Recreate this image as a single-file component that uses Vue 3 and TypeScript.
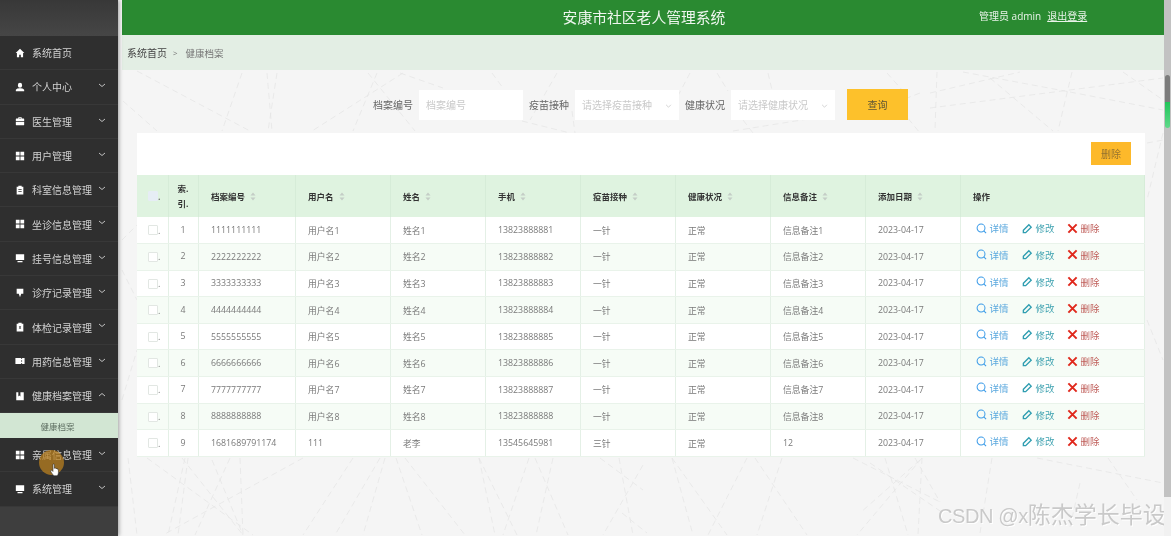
<script setup lang="ts">
interface MenuItem { label: string; icon: string; arrow?: 'down' | 'up'; sub?: string }
const menu: MenuItem[] = [
  { label: '系统首页', icon: 'home' },
  { label: '个人中心', icon: 'user', arrow: 'down' },
  { label: '医生管理', icon: 'case', arrow: 'down' },
  { label: '用户管理', icon: 'grid', arrow: 'down' },
  { label: '科室信息管理', icon: 'clip', arrow: 'down' },
  { label: '坐诊信息管理', icon: 'grid', arrow: 'down' },
  { label: '挂号信息管理', icon: 'screen', arrow: 'down' },
  { label: '诊疗记录管理', icon: 'pin', arrow: 'down' },
  { label: '体检记录管理', icon: 'clipx', arrow: 'down' },
  { label: '用药信息管理', icon: 'ticket', arrow: 'down' },
  { label: '健康档案管理', icon: 'book', arrow: 'up', sub: '健康档案' },
  { label: '亲属信息管理', icon: 'grid', arrow: 'down' },
  { label: '系统管理', icon: 'screen', arrow: 'down' },
]
const cols = ['档案编号', '用户名', '姓名', '手机', '疫苗接种', '健康状况', '信息备注', '添加日期']
const rows = [
  ['1111111111', '用户名1', '姓名1', '13823888881', '一针', '正常', '信息备注1'],
  ['2222222222', '用户名2', '姓名2', '13823888882', '一针', '正常', '信息备注2'],
  ['3333333333', '用户名3', '姓名3', '13823888883', '一针', '正常', '信息备注3'],
  ['4444444444', '用户名4', '姓名4', '13823888884', '一针', '正常', '信息备注4'],
  ['5555555555', '用户名5', '姓名5', '13823888885', '一针', '正常', '信息备注5'],
  ['6666666666', '用户名6', '姓名6', '13823888886', '一针', '正常', '信息备注6'],
  ['7777777777', '用户名7', '姓名7', '13823888887', '一针', '正常', '信息备注7'],
  ['8888888888', '用户名8', '姓名8', '13823888888', '一针', '正常', '信息备注8'],
  ['1681689791174', '111', '老李', '13545645981', '三针', '正常', '12'],
]
const lines = [
  [137, 71, 250, 131], [242, 73, 222, 131], [267, 73, 272, 131], [277, 73, 268, 131], [403, 73, 312, 131],
  [377, 73, 353, 131], [368, 73, 415, 131], [123, 101, 157, 131], [400, 73, 443, 88], [492, 73, 503, 88],
  [557, 73, 530, 120], [522, 121, 570, 133], [572, 111, 575, 133], [690, 73, 670, 111], [717, 73, 728, 91],
  [768, 73, 772, 90], [733, 131, 833, 115], [743, 120, 753, 133], [887, 73, 903, 91], [920, 93, 902, 100],
  [902, 111, 920, 133], [937, 72, 935, 130], [1072, 72, 1058, 131], [963, 72, 1070, 92], [1070, 92, 1163, 110],
  [930, 108, 1163, 78], [990, 78, 1053, 131], [1123, 72, 1163, 100], [930, 93, 1020, 72],
  [1163, 133, 1147, 200], [1147, 143, 1163, 140],
  [122, 240, 137, 225], [122, 270, 137, 300], [122, 400, 137, 350], [1147, 320, 1163, 360],
  [128, 458, 137, 535], [147, 458, 253, 535], [185, 458, 168, 535], [188, 458, 178, 535], [182, 458, 243, 535],
  [212, 460, 243, 535], [230, 458, 195, 535], [240, 458, 243, 535], [303, 458, 163, 535], [353, 458, 303, 535],
  [380, 458, 335, 535], [385, 458, 363, 535], [396, 458, 422, 535], [405, 458, 465, 535], [479, 458, 495, 535],
  [479, 458, 517, 535], [529, 458, 503, 535], [535, 458, 568, 535], [553, 458, 536, 535], [600, 458, 643, 490],
  [619, 458, 633, 535], [643, 465, 603, 535], [672, 458, 693, 535], [672, 458, 727, 535], [747, 458, 708, 535],
  [755, 458, 807, 535], [782, 458, 757, 535], [622, 513, 647, 533], [853, 458, 940, 502], [885, 458, 908, 535],
  [922, 458, 857, 535], [922, 458, 918, 535], [915, 458, 940, 502], [992, 458, 980, 533], [1037, 458, 1163, 483],
  [1108, 458, 1137, 500], [1080, 483, 1070, 527], [920, 460, 860, 513], [870, 463, 943, 513],
]
</script>

<template>
  <div class="page">
    <aside class="side">
      <div class="side-top"></div>
      <template v-for="m in menu" :key="m.label">
        <div class="mi">
          <svg class="mi-ic" viewBox="0 0 12 12" fill="#fff">
            <path v-if="m.icon === 'home'" d="M6 1 .8 6h1.500v5h2.700V8h2v3h2.700V6h1.500z" />
            <path v-else-if="m.icon === 'user'" d="M3.500 3.500a2.500 2.500 0 1 1 5 0v1a2.500 2.500 0 0 1-5 0zM1 9.200c1.500-1.200 3-1.400 3.500-1.600h3c.6.2 2 .4 3.500 1.600V11H1z" />
            <path v-else-if="m.icon === 'case'" d="M4 1.500h4V3h2.500A.5.5 0 0 1 11 3.500V6H1V3.500A.5.5 0 0 1 1.500 3H4zM5 2.500V3h2v-.5zM1 7h10v3.500a.5.5 0 0 1-.5.5h-9a.5.5 0 0 1-.5-.5z" />
            <path v-else-if="m.icon === 'grid'" d="M1 1h4.500v4.500H1zM6.500 1H11v4.500H6.500zM1 6.500h4.500V11H1zM6.500 6.500H11V11H6.500z" />
            <path v-else-if="m.icon === 'clip'" fill-rule="evenodd" d="M4 1h4v1h2v9.500H2V2h2zM4 5v1h4V5zM4 7.500v1h4v-1z" />
            <path v-else-if="m.icon === 'clipx'" fill-rule="evenodd" d="M4 1h4v1h2v9.500H2V2h2zM4.500 5l1 1.500-1 1.500h1l.5-.8.5.8h1l-1-1.500 1-1.500h-1L6 5.800 5.500 5z" />
            <path v-else-if="m.icon === 'screen'" d="M1 1.500h10v7H1zM3 9.500h6V11H3z" />
            <path v-else-if="m.icon === 'pin'" d="M2 1h8v6H7.500L6 11 4.500 7H2z" />
            <path v-else-if="m.icon === 'ticket'" d="M.5 2.500h7v1h1v-1h3v7h-3v-1h-1v1h-7zM7.500 5v2h1V5z" />
            <path v-else-if="m.icon === 'book'" d="M1.500 1.500H4v5l1.200-1 1.300 1v-5h4v9.500h-9z" />
          </svg>
          <span class="mi-txt">{{ m.label }}</span>
          <svg v-if="m.arrow" class="mi-ar" viewBox="0 0 8 5" fill="none" stroke="#cfcfcf" stroke-width="0.9">
            <path v-if="m.arrow === 'down'" d="M1 1l3 2.500L7 1" />
            <path v-else d="M1 4l3-2.500L7 4" />
          </svg>
        </div>
        <div v-if="m.sub" class="sub">{{ m.sub }}</div>
      </template>
      <div class="side-rest"></div>
      <div class="click"></div>
      <svg class="hand" viewBox="0 0 12 16">
        <path d="M3.500 1.500c0-1 1.700-1 1.700 0V6l.3-.4c.8-.3 1.500 0 1.600.6.700-.3 1.400 0 1.500.6.800-.2 1.500.2 1.500 1V11c0 2-1 3.500-1.500 4H4.500C3.500 13.500 1 10.500.8 9.500c-.2-1 1-1.500 1.700-.8l1 1z" fill="#fff" stroke="#222" stroke-width=".7" />
      </svg>
    </aside>

    <main class="main">
      <svg class="deco" viewBox="0 0 1171 536" width="1171" height="536">
        <line v-for="(l, i) in lines" :key="i" :x1="l[0]" :y1="l[1]" :x2="l[2]" :y2="l[3]" />
      </svg>
      <header class="top">
        <div class="title">安康市社区老人管理系统</div>
        <div class="user">
          <span>管理员 admin</span>
          <span class="logout">退出登录</span>
        </div>
      </header>
      <nav class="crumb">
        <span class="c1">系统首页</span>
        <span class="c2">&gt;</span>
        <span class="c3">健康档案</span>
      </nav>
      <section class="search">
        <label class="lb">档案编号</label>
        <div class="fld">档案编号</div>
        <label class="lb">疫苗接种</label>
        <div class="fld sel">请选择疫苗接种
          <svg viewBox="0 0 8 5" fill="none" stroke="#bbb" stroke-width=".8"><path d="M1 1l3 3 3-3" /></svg>
        </div>
        <label class="lb">健康状况</label>
        <div class="fld sel">请选择健康状况
          <svg viewBox="0 0 8 5" fill="none" stroke="#bbb" stroke-width=".8"><path d="M1 1l3 3 3-3" /></svg>
        </div>
        <button class="query">查询</button>
      </section>
      <section class="card">
        <div class="bar"><button class="del">删除</button></div>
        <table class="tb">
          <colgroup>
            <col class="c-ck" /><col class="c-idx" /><col class="c-first" />
            <col class="c-n" /><col class="c-n" /><col class="c-n" />
            <col class="c-n" /><col class="c-n" /><col class="c-n" />
            <col class="c-n" /><col />
          </colgroup>
          <thead>
            <tr>
              <th class="ck"><span class="box head"></span><i>.</i></th>
              <th class="idx">索.<br />引.</th>
              <th v-for="c in cols" :key="c">
                {{ c }}
                <svg class="sort" viewBox="0 0 6 9" fill="#c4cdc6"><path d="M3 .5 5.500 3.500H.5zM3 8.500.5 5.500h5z" /></svg>
              </th>
              <th>操作</th>
            </tr>
          </thead>
          <tbody>
            <tr v-for="(r, i) in rows" :key="i">
              <td class="ck"><span class="box"></span><i>.</i></td>
              <td class="idx">{{ i + 1 }}</td>
              <td v-for="(v, j) in r" :key="j">{{ v }}</td>
              <td>2023-04-17</td>
              <td class="ops">
                <span class="op blue">
                  <svg viewBox="0 0 12 12" fill="none" stroke="#3b9be8" stroke-width="1.100"><circle cx="5.500" cy="5.500" r="4.300" /><path d="M8.500 8.500 11 11" /></svg>详情
                </span>
                <span class="op teal">
                  <svg viewBox="0 0 12 12" fill="none" stroke="#2e9db0" stroke-width="1.500"><path d="M1.500 8 7.500 2l2.500 2.500-6 6H1.500z" /></svg>修改
                </span>
                <span class="op red">
                  <svg viewBox="0 0 12 12" fill="none" stroke="#e0281c" stroke-width="2.200"><path d="M1.500 1.500l9 9M10.500 1.500l-9 9" /></svg>删除
                </span>
              </td>
            </tr>
          </tbody>
        </table>
      </section>
      <div class="mark"><span class="mk-l">CSDN @x</span><span class="mk-c">陈杰学长毕设</span></div>
    </main>

    <div class="scroll">
      <div class="track-top"></div>
      <div class="thumb"></div>
      <div class="thumb-g"></div>
      <div class="track"></div>
      <div class="track-end"></div>
    </div>
  </div>
</template>

<style>
html, body { margin: 0; padding: 0; background: #f5f5f5; overflow: hidden; }
</style>

<style scoped>
.page {
  display: flex; width: 1171px; height: 536px; overflow: hidden; position: relative;
  font-family: "Open Sans", "Noto Sans CJK SC", sans-serif; background: #f5f5f5;
  filter: blur(0.5px);
}
.side {
  width: 118px; flex: none; display: flex; flex-direction: column; position: relative;
  background: #2f2f2f; box-shadow: 1px 0 4px rgba(0,0,0,.35); z-index: 2;
}
.side-top { height: 36px; flex: none; background: linear-gradient(#383838, #464646); }
.side-rest { flex: 1; background: #3e3e3e; }
.mi {
  height: 34.3px; flex: none; box-sizing: border-box; display: flex; align-items: center;
  border-bottom: 1px solid #383838; color: #d2d2d2; font-size: 10px; position: relative;
}
.mi-ic { width: 10px; height: 10px; margin-left: 15px; margin-right: 7px; flex: none; }
.mi-txt { white-space: nowrap; }
.mi-ar { position: absolute; left: 98px; top: 13px; width: 8px; height: 5px; }
.sub {
  height: 24.7px; flex: none; background: #d2e6d3; color: #5f6f62; font-size: 8.5px;
  display: flex; align-items: center; justify-content: center; padding-right: 3px; box-sizing: border-box;
}
.click { position: absolute; left: 39px; top: 450px; width: 25px; height: 25px; border-radius: 50%; background: rgba(190,130,30,.72); }
.hand { position: absolute; left: 50px; top: 463px; width: 10px; height: 14px; }

.main { flex: 1; min-width: 0; position: relative; margin-left: 4px; background: #f5f5f5; }
.deco { position: absolute; left: -122px; top: 0; pointer-events: none; }
.deco line { stroke: #e6e6e6; stroke-width: .8; stroke-dasharray: 6 4; fill: none; }
.top {
  height: 35px; background: #2a8a31; color: #fff; position: relative; display: flex;
  align-items: center; justify-content: center; box-sizing: border-box;
}
.title { font-size: 14.8px; color: #eef6ee; margin-top: -2px; margin-left: 2px; }
.user { position: absolute; left: 857px; top: 8px; font-size: 10px; color: #e9f3e9; display: flex; gap: 6px; white-space: nowrap; }
.logout { text-decoration: underline; text-underline-offset: 1px; text-decoration-thickness: .5px; }
.crumb {
  height: 35px; background: #e3eee4; display: flex; align-items: center; padding-left: 5px; position: relative;
}
.c1 { font-size: 10px; color: #444; }
.c2 { font-size: 8px; color: #777; margin: 0 8px 0 6px; }
.c3 { font-size: 9.5px; color: #777; }
.search {
  position: relative; display: flex; align-items: center; padding: 19px 0 0 251px; height: 31px; box-sizing: content-box;
}
.lb { font-size: 10px; color: #666; margin-right: 6px; white-space: nowrap; }
.fld {
  width: 104px; height: 30px; box-sizing: border-box; background: #fff; color: #c9c9c9; font-size: 10px;
  display: flex; align-items: center; padding-left: 7px; margin-right: 6px; position: relative; white-space: nowrap;
}
.sel svg { position: absolute; right: 7px; top: 14px; width: 7px; height: 4px; }
.query {
  width: 61px; height: 31px; margin-left: 6px; border: 0; background: #fdc12b; color: #5f5635; font-size: 10px;
  font-family: inherit; padding: 0;
}
.card { position: relative; margin: 13px 0 0 15px; width: 1008px; background: #fff; }
.bar { height: 42px; display: flex; align-items: center; justify-content: flex-end; padding-right: 14px; box-sizing: border-box; }
.del {
  width: 40px; height: 23px; border: 0; background: #fdb92a; color: #94722f; font-size: 10px; padding: 0; font-family: inherit; margin-top: -1px;
}
.tb { border-collapse: collapse; table-layout: fixed; width: 1008px; font-size: 8.8px; }
.c-ck { width: 31px; }
.c-idx { width: 30px; }
.c-first { width: 97px; }
.c-n { width: 95px; }
.tb th {
  background: #dff3e0; height: 42px; padding: 0 0 0 12.5px; text-align: left; color: #333; font-weight: 700; font-size: 8.5px;
  border-right: 1px solid #d6ecd8; box-sizing: border-box; white-space: nowrap;
}
.tb td {
  height: 26.6px; padding: 0 0 0 12.5px; color: #7a7a7a; border-right: 1px solid #e4f0e6; border-bottom: 1px solid #e9f3ea;
  box-sizing: border-box; white-space: nowrap;
}
.tb tbody tr:nth-child(even) td { background: #f6fcf6; }
.tb th.ck, .tb td.ck { padding: 0 0 0 11px; }
.tb th.idx, .tb td.idx { padding: 0; text-align: center; line-height: 15px; }
.box {
  display: inline-block; width: 8px; height: 8px; border: 1px solid #e2e7e3; border-radius: 1px; background: #fff; vertical-align: middle;
}
.box.head { background: #e6edf5; border-color: #e6edf5; }
.ck i { font-style: normal; font-size: 9px; color: #777; vertical-align: -1px; }
.sort { width: 6px; height: 9px; margin-left: 3px; vertical-align: -1px; }
.tb td.ops { padding: 0 0 2px 15px; }
.op { display: inline-flex; align-items: center; font-size: 9.5px; margin-top: -3px; vertical-align: middle; }
.op svg { width: 11px; height: 11px; margin-right: 3px; }
.blue { color: #5aa8de; margin-right: 13px; }
.teal { color: #43a4b2; margin-right: 12px; }
.red { color: #c0605c; }
.mark {
  position: absolute; left: 816px; top: 501px; line-height: 28px; color: #c9c9c9; white-space: nowrap;
  font-family: "Liberation Sans", "Noto Sans CJK SC", sans-serif;
  text-shadow: 1px 1px 0 #fff;
}
.mk-l { font-size: 20px; letter-spacing: -.4px; }
.mk-c { font-size: 23px; }
.scroll { width: 7px; flex: none; display: flex; flex-direction: column; position: relative; z-index: 1; background: #c2c2c2; }
.track-top { height: 75px; flex: none; }
.thumb { height: 27px; flex: none; margin: 0 1px; background: #7c7c7c; border-radius: 3px 3px 0 0; }
.thumb-g { height: 26px; flex: none; margin: 0 1px; background: linear-gradient(#22c45a, #5fd98a); border-radius: 0 0 3px 3px; }
.track { flex: 1; }
.track-end { height: 39px; flex: none; background: #f1f1f1; }
</style>
